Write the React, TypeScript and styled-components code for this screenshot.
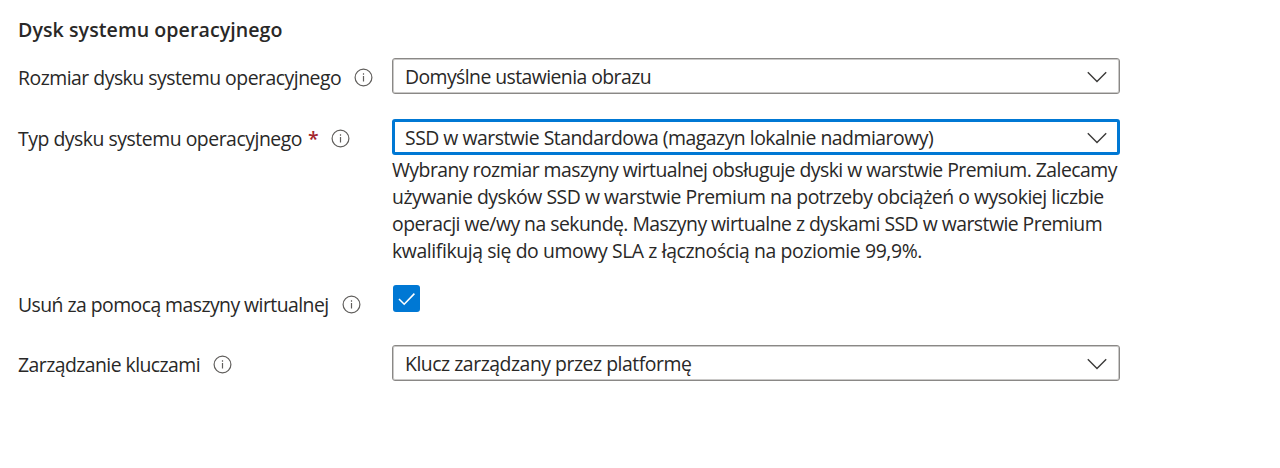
import React from "react";
import styled, { createGlobalStyle } from "styled-components";

const GlobalStyle = createGlobalStyle`
  * { box-sizing: border-box; }
  body {
    margin: 0;
    background: #fff;
    color: #292827;
    font-family: "Segoe UI", "Open Sans", "Noto Sans", sans-serif;
    font-size: 19.4px;
  }
`;

const Form = styled.main`
  height: 468px;
  padding: 16px 0 0 18px;
  background: #fff;
`;

const Title = styled.h2`
  margin: 0;
  height: 42px;
  font-size: 19.6px;
  font-weight: 600;
  line-height: 28px;
  letter-spacing: 0.06px;
  white-space: nowrap;
`;

const Row = styled.div<{ $height: number }>`
  display: grid;
  grid-template-columns: 374px 728px;
  align-items: start;
  height: ${({ $height }) => $height}px;
`;

const LabelCell = styled.div`
  display: flex;
  align-items: center;
  height: 36px;
  margin-top: 1px;
  white-space: nowrap;
`;

const Text = styled.span<{ $spacing: number }>`
  letter-spacing: ${({ $spacing }) => $spacing}px;
  line-height: 27px;
  white-space: nowrap;
`;

const Required = styled.span`
  margin-left: 6px;
  width: 10px;
  color: #a4262c;
  font-weight: 600;
`;

const InfoSvg = styled.svg`
  flex: none;
  margin-left: 13px;
  margin-top: 1px;
`;

const Select = styled.div<{ $focused?: boolean }>`
  display: flex;
  align-items: center;
  justify-content: space-between;
  height: 36px;
  padding: 1px ${({ $focused }) => ($focused ? 10 : 12)}px 0;
  border: ${({ $focused }) => ($focused ? "3px solid #0078d4" : "1px solid #8a8886")};
  border-radius: 3px;
  box-shadow: ${({ $focused }) => ($focused ? "none" : "inset 0 0 0 1px rgba(138, 136, 134, 0.45)")};
`;

const Help = styled.p`
  display: flex;
  flex-direction: column;
  margin: 1px 0 0;
`;

const Checkbox = styled.span`
  display: flex;
  width: 27px;
  height: 27px;
  margin-left: 1px;
  background: #0078d4;
  border-radius: 3px;
`;

const Info = () => (
  <InfoSvg width="19" height="19" viewBox="0 0 19 19" fill="none">
    <circle cx="9.5" cy="9.5" r="8.4" stroke="#605e5c" strokeWidth="1.2" />
    <path d="M9.5 8v5.6M9.5 5.2v1.5" stroke="#605e5c" strokeWidth="1.2" />
  </InfoSvg>
);

const Chevron = () => (
  <svg width="20" height="12" viewBox="0 0 20 12" fill="none">
    <path d="M0.8 1.2L10 10.4L19.2 1.2" stroke="#3b3a39" strokeWidth="1.4" />
  </svg>
);

const helpLines = [
  { text: "Wybrany rozmiar maszyny wirtualnej obsługuje dyski w warstwie Premium. Zalecamy", spacing: -0.53 },
  { text: "używanie dysków SSD w warstwie Premium na potrzeby obciążeń o wysokiej liczbie", spacing: -0.47 },
  { text: "operacji we/wy na sekundę. Maszyny wirtualne z dyskami SSD w warstwie Premium", spacing: -0.53 },
  { text: "kwalifikują się do umowy SLA z łącznością na poziomie 99,9%.", spacing: -0.4 },
];

export default function App() {
  return (
    <>
      <GlobalStyle />
      <Form>
        <Title>Dysk systemu operacyjnego</Title>
        <Row $height={61}>
          <LabelCell>
            <Text $spacing={-0.5}>Rozmiar dysku systemu operacyjnego</Text>
            <Info />
          </LabelCell>
          <Select>
            <Text $spacing={-0.57}>Domyślne ustawienia obrazu</Text>
            <Chevron />
          </Select>
        </Row>
        <Row $height={166}>
          <LabelCell>
            <Text $spacing={-0.47}>Typ dysku systemu operacyjnego</Text>
            <Required>*</Required>
            <Info />
          </LabelCell>
          <div>
            <Select $focused>
              <Text $spacing={-0.5}>SSD w warstwie Standardowa (magazyn lokalnie nadmiarowy)</Text>
              <Chevron />
            </Select>
            <Help>
              {helpLines.map((line) => (
                <Text key={line.text} $spacing={line.spacing}>{line.text}</Text>
              ))}
            </Help>
          </div>
        </Row>
        <Row $height={60}>
          <LabelCell>
            <Text $spacing={-0.55}>Usuń za pomocą maszyny wirtualnej</Text>
            <Info />
          </LabelCell>
          <Checkbox>
            <svg width="27" height="27" viewBox="0 0 27 27" fill="none">
              <path d="M6 14L11.2 19.2L21.4 8.6" stroke="#fff" strokeWidth="1.6" />
            </svg>
          </Checkbox>
        </Row>
        <Row $height={40}>
          <LabelCell>
            <Text $spacing={-0.55}>Zarządzanie kluczami</Text>
            <Info />
          </LabelCell>
          <Select>
            <Text $spacing={-0.47}>Klucz zarządzany przez platformę</Text>
            <Chevron />
          </Select>
        </Row>
      </Form>
    </>
  );
}
